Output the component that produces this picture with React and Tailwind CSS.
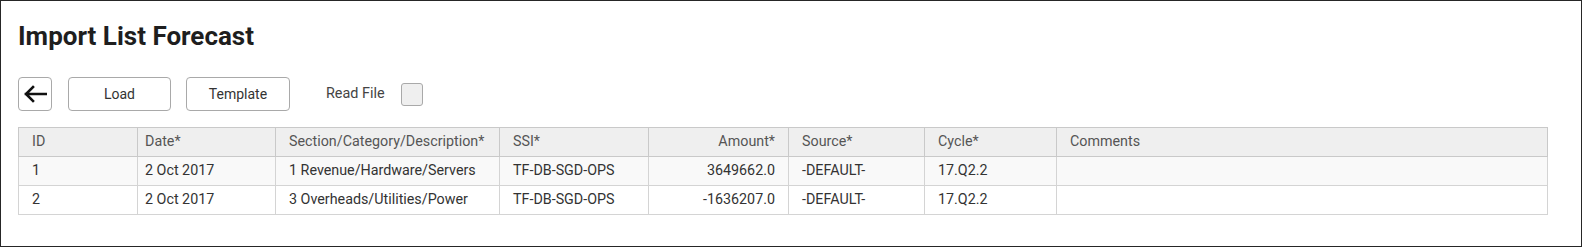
import React from "react";

const columns = [
  { key: "id", label: "ID", width: 119 },
  { key: "date", label: "Date*", width: 138, pad: "pl-[7px]" },
  { key: "section", label: "Section/Category/Description*", width: 224 },
  { key: "ssi", label: "SSI*", width: 149 },
  { key: "amount", label: "Amount*", width: 140, right: true },
  { key: "source", label: "Source*", width: 136 },
  { key: "cycle", label: "Cycle*", width: 132 },
  { key: "comments", label: "Comments" },
];

const rows = [
  {
    id: "1",
    date: "2 Oct 2017",
    section: "1 Revenue/Hardware/Servers",
    ssi: "TF-DB-SGD-OPS",
    amount: "3649662.0",
    source: "-DEFAULT-",
    cycle: "17.Q2.2",
    comments: "",
  },
  {
    id: "2",
    date: "2 Oct 2017",
    section: "3 Overheads/Utilities/Power",
    ssi: "TF-DB-SGD-OPS",
    amount: "-1636207.0",
    source: "-DEFAULT-",
    cycle: "17.Q2.2",
    comments: "",
  },
];

function ArrowLeft() {
  return (
    <svg width="24" height="18" viewBox="0 0 24 18" fill="none">
      <path
        d="M23 9H3M10 2L3 9L10 16"
        stroke="#111"
        strokeWidth="2.6"
        strokeLinecap="square"
      />
    </svg>
  );
}

function App() {
  return (
    <div
      className="w-[1582px] h-[247px] border border-[#262626] bg-white pl-[17px] pt-[19px]"
      style={{ fontFamily: "Roboto, 'Liberation Sans', sans-serif" }}
    >
      <h1 className="text-[26px] leading-[32px] font-bold text-[#1e1e1e]">
        Import List Forecast
      </h1>

      <div className="flex items-center mt-[25px] h-[34px]">
        <button className="w-[34px] h-[34px] flex items-center justify-center border border-[#a9a9a9] rounded-[4px] bg-white">
          <ArrowLeft />
        </button>
        <button className="ml-[16px] w-[103px] h-[34px] border border-[#a9a9a9] rounded-[4px] bg-white text-[14px] text-[#333]">
          Load
        </button>
        <button className="ml-[15px] w-[104px] h-[34px] border border-[#a9a9a9] rounded-[4px] bg-white text-[14px] text-[#333]">
          Template
        </button>
        <span className="ml-[36px] text-[14.4px] text-[#444]">Read File</span>
        <span className="ml-[16px] w-[22px] h-[23px] border border-[#a9a9a9] rounded-[3px] bg-[#efefef]" />
      </div>

      <table className="mt-[16px] w-[1530px] border-collapse table-fixed text-[14.3px]">
        <colgroup>
          {columns.map((c) => (
            <col key={c.key} style={c.width ? { width: c.width } : undefined} />
          ))}
        </colgroup>
        <thead>
          <tr className="bg-[#efefef] h-[29px]">
            {columns.map((c) => (
              <th
                key={c.key}
                className={
                  "border border-[#c9c9c9] px-[13px] font-normal text-[#555] " +
                  (c.pad ? c.pad + " " : "") +
                  (c.right ? "text-right" : "text-left")
                }
              >
                {c.label}
              </th>
            ))}
          </tr>
        </thead>
        <tbody>
          {rows.map((r, i) => (
            <tr key={r.id} className={(i % 2 === 0 ? "bg-[#f9f9f9]" : "bg-white") + " h-[29px]"}>
              {columns.map((c) => (
                <td
                  key={c.key}
                  className={
                    "border border-[#d4d4d4] px-[13px] text-[#333] " +
                    (c.pad ? c.pad + " " : "") +
                    (c.right ? "text-right" : "text-left")
                  }
                >
                  {r[c.key]}
                </td>
              ))}
            </tr>
          ))}
        </tbody>
      </table>
    </div>
  );
}

export default App;
